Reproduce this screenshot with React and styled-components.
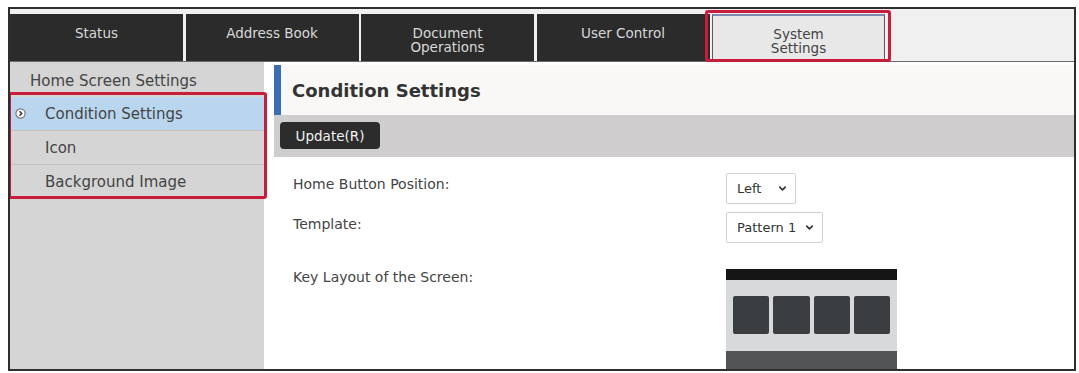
import React from 'react';
import styled, { createGlobalStyle } from 'styled-components';
import { ChevronDown } from 'lucide-react';

const GlobalStyle = createGlobalStyle`
    body {
        margin: 0;
        background: #fff;
        font-family: "DejaVu Sans", Verdana, sans-serif;
    }
`;

const Page = styled.div`
    padding: 7px 3px 2px 8px;
`;

const Frame = styled.div`
    width: 1068px;
    height: 364px;
    box-sizing: border-box;
    border: 2px solid #2e2e2e;
    display: flex;
    flex-direction: column;
    overflow: hidden;
`;

const TabBar = styled.nav`
    flex-shrink: 0;
    height: 53px;
    box-sizing: border-box;
    padding-top: 5px;
    display: flex;
    gap: 2.5px;
    background: #f1f0f0;
    border-bottom: 1px solid #6b6b6b;
`;

const Tab = styled.div`
    position: relative;
    width: 173px;
    height: 47px;
    box-sizing: border-box;
    padding-top: ${(p) => (p.$active ? '11px' : '12px')};
    text-align: center;
    font-size: 13.5px;
    line-height: 14px;
    background: ${(p) => (p.$active ? '#e8e8e8' : '#2b2b2b')};
    color: ${(p) => (p.$active ? '#444' : '#d9d9d9')};
    border: ${(p) => (p.$active ? '1px solid #5a5a5a' : 'none')};
    border-top: ${(p) => (p.$active ? '2px solid #7d8cae' : 'none')};
`;

const Highlight = styled.div`
    position: absolute;
    top: ${(p) => p.$top}px;
    left: ${(p) => p.$left}px;
    right: ${(p) => p.$right}px;
    bottom: ${(p) => p.$bottom}px;
    border: 3px solid #c91c3d;
    border-radius: 3px;
    pointer-events: none;
    z-index: 2;
`;

const Body = styled.div`
    flex: 1;
    min-height: 0;
    display: flex;
`;

const Sidebar = styled.aside`
    width: 254px;
    flex-shrink: 0;
    background: #d5d5d5;
    color: #444;
    font-size: 15px;
`;

const SideHeading = styled.div`
    height: 35px;
    padding: 3px 0 0 20px;
    box-sizing: border-box;
    display: flex;
    align-items: center;
`;

const SideGroup = styled.div`
    position: relative;
`;

const SideItem = styled.div`
    height: 34px;
    box-sizing: border-box;
    display: flex;
    align-items: center;
    padding-left: ${(p) => (p.$active ? '5px' : '35px')};
    gap: 19px;
    background: ${(p) => (p.$active ? '#b9d6ee' : 'transparent')};
    border-bottom: 1px solid ${(p) => (p.$last ? 'transparent' : '#c2c2c2')};
`;

const Main = styled.main`
    flex: 1;
    min-width: 0;
    padding: 3px 0 0 10px;
    display: flex;
    flex-direction: column;
    background: #fff;
`;

const TitleBar = styled.h1`
    flex-shrink: 0;
    margin: 0;
    height: 50px;
    box-sizing: border-box;
    display: flex;
    align-items: center;
    padding-left: 11px;
    background: #faf8f6;
    border-left: 7px solid #3b6db3;
    font-size: 18px;
    font-weight: bold;
    color: #333;
`;

const Toolbar = styled.div`
    flex-shrink: 0;
    height: 42px;
    box-sizing: border-box;
    padding: 7px 6px;
    background: #cfcdcd;
`;

const UpdateButton = styled.button`
    width: 100px;
    height: 27px;
    border: none;
    border-radius: 4px;
    background: #2c2c2c;
    color: #f2f2f2;
    font-family: inherit;
    font-size: 13.5px;
`;

const Form = styled.div`
    flex-shrink: 0;
    padding: 16px 0 0 19px;
`;

const FieldRow = styled.div`
    display: grid;
    grid-template-columns: 433px auto;
    align-items: start;
    margin-top: ${(p) => p.$gap || 0}px;
`;

const Label = styled.div`
    padding-top: ${(p) => p.$offset}px;
    font-size: 14px;
    line-height: 14px;
    color: #444;
`;

const Select = styled.div`
    width: ${(p) => p.$width}px;
    height: 31px;
    box-sizing: border-box;
    display: flex;
    align-items: center;
    justify-content: space-between;
    padding: 0 7px 0 10px;
    border: 1px solid #d0d0d0;
    border-radius: 2px;
    background: #fff;
    font-size: 13px;
    color: #333;
`;

const Preview = styled.div`
    width: 171px;
    display: flex;
    flex-direction: column;
`;

const PreviewTop = styled.div`
    height: 11px;
    background: #141414;
`;

const PreviewKeys = styled.div`
    height: 71px;
    box-sizing: border-box;
    padding: 16px 7px 0;
    display: flex;
    gap: 4px;
    background: #d8d9da;
`;

const Key = styled.div`
    width: 37px;
    height: 38px;
    border-radius: 2px;
    background: #3b3e41;
`;

const PreviewBottom = styled.div`
    height: 30px;
    background: #525456;
`;

const CircleArrow = () => (
    <svg width="11" height="11" viewBox="0 0 11 11">
        <circle cx="5.5" cy="5.5" r="4.6" fill="#fff" stroke="#777" strokeWidth="1.2" />
        <path d="M4.5 3.3 L6.7 5.5 L4.5 7.7" fill="none" stroke="#333" strokeWidth="1.5" />
    </svg>
);

const tabs = ['Status', 'Address Book', 'Document\nOperations', 'User Control'];

export default function App() {
    return (
        <Page>
            <GlobalStyle />
            <Frame>
                <TabBar>
                    {tabs.map((t) => (
                        <Tab key={t}>
                            {t.split('\n').map((line) => (
                                <div key={line}>{line}</div>
                            ))}
                        </Tab>
                    ))}
                    <Tab $active>
                        <div>System</div>
                        <div>Settings</div>
                        <Highlight $top={-6} $left={-8} $right={-7} $bottom={-2} />
                    </Tab>
                </TabBar>
                <Body>
                    <Sidebar>
                        <SideHeading>Home Screen Settings</SideHeading>
                        <SideGroup>
                            <SideItem $active>
                                <CircleArrow />
                                Condition Settings
                            </SideItem>
                            <SideItem>Icon</SideItem>
                            <SideItem $last>Background Image</SideItem>
                            <Highlight $top={-5} $left={-2} $right={-3} $bottom={0} />
                        </SideGroup>
                    </Sidebar>
                    <Main>
                        <TitleBar>Condition Settings</TitleBar>
                        <Toolbar>
                            <UpdateButton>Update(R)</UpdateButton>
                        </Toolbar>
                        <Form>
                            <FieldRow>
                                <Label $offset={4}>Home Button Position:</Label>
                                <Select $width={70}>
                                    Left
                                    <ChevronDown size={11} strokeWidth={3.5} color="#333" />
                                </Select>
                            </FieldRow>
                            <FieldRow $gap={8}>
                                <Label $offset={5}>Template:</Label>
                                <Select $width={97}>
                                    Pattern 1
                                    <ChevronDown size={11} strokeWidth={3.5} color="#333" />
                                </Select>
                            </FieldRow>
                            <FieldRow $gap={26}>
                                <Label $offset={1}>Key Layout of the Screen:</Label>
                                <Preview>
                                    <PreviewTop />
                                    <PreviewKeys>
                                        <Key />
                                        <Key />
                                        <Key />
                                        <Key />
                                    </PreviewKeys>
                                    <PreviewBottom />
                                </Preview>
                            </FieldRow>
                        </Form>
                    </Main>
                </Body>
            </Frame>
        </Page>
    );
}
